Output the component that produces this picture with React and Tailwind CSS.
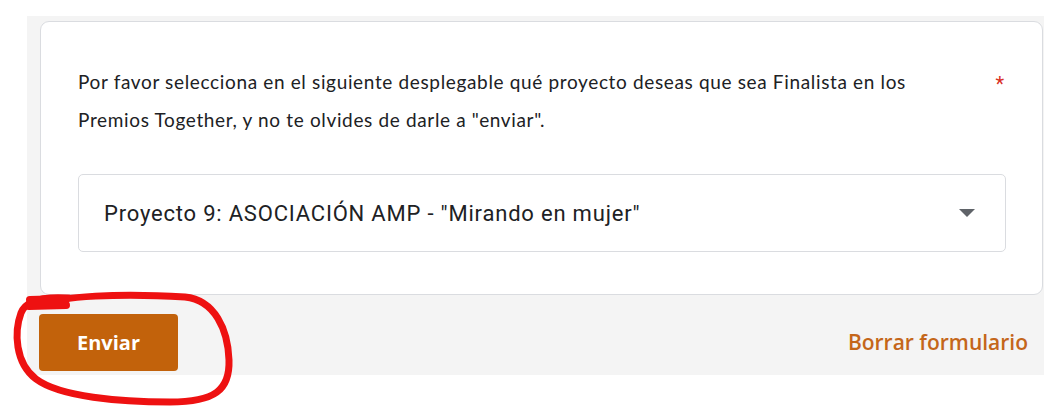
import React from 'react';

const RedLoop = () => (
  <svg
    className="absolute left-0 top-0 pointer-events-none"
    width="1056"
    height="415"
    viewBox="0 0 1056 415"
    fill="none"
  >
    <path
      d="M40 305 C60 296 120 293 185 297 C215 300 228 330 229 360 C230 390 215 402 170 402 C120 402 60 397 36 379 C15 363 14 332 21 313 C25 302 38 296 68 298"
      stroke="#ee1111"
      strokeWidth="7"
      strokeLinecap="round"
      strokeLinejoin="round"
    />
    <path d="M30 300 L66 299 M29 306 L66 305" stroke="#ee1111" strokeWidth="8" strokeLinecap="round" />
  </svg>
);

const App = () => {
  return (
    <div className="relative w-[1056px] h-[415px] bg-white overflow-hidden">
      <div className="ml-[27px] mt-[16px] w-[1017px] h-[359px] bg-[#f4f4f4] flex flex-col">
        <div className="ml-[13px] mt-[5px] w-[1003px] h-[274px] bg-white border border-[#dadce0] rounded-[9px] pl-[37px] pr-[36px] pt-[41px]">
          <div className="flex items-start">
            <p className="w-[870px] font-['Lato',sans-serif] text-[19px] tracking-[0.65px] leading-[38px] text-[#202124]">
              Por favor selecciona en el siguiente desplegable qué proyecto deseas que sea Finalista en los Premios Together, y no te olvides de darle a "enviar".
            </p>
            <span className="ml-auto text-[#d93025] font-['Roboto',sans-serif] text-[20px] leading-[38px] mr-[2px] mt-[2px]">*</span>
          </div>
          <div className="mt-[35px] h-[78px] border border-[#dadce0] rounded-[5px] flex items-center justify-between pl-[25px] pr-[30px]">
            <span className="font-['Roboto',sans-serif] text-[22px] tracking-[0.8px] text-[#202124]">
              Proyecto 9: ASOCIACIÓN AMP - "Mirando en mujer"
            </span>
            <svg width="16" height="8" viewBox="0 0 16 8">
              <path d="M0 0 L16 0 L8 8 Z" fill="#5f6368" />
            </svg>
          </div>
        </div>
        <div className="flex items-center justify-between mt-[19px] pr-[16px]">
          <button className="ml-[12px] w-[139px] h-[57px] rounded-[4px] bg-[#c2620b] text-white font-['Open_Sans',sans-serif] font-bold text-[20px]">
            Enviar
          </button>
          <span className="font-['Open_Sans',sans-serif] font-semibold text-[21px] text-[#c4661a]">Borrar formulario</span>
        </div>
      </div>
      <RedLoop />
    </div>
  );
};

export default App;
